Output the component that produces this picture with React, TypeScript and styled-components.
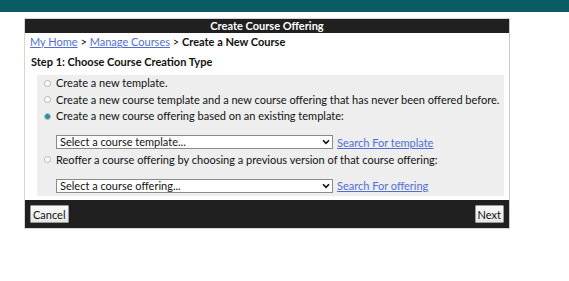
import React, { useState } from 'react';
import styled, { createGlobalStyle } from 'styled-components';

const GlobalStyle = createGlobalStyle`
  body {
    margin: 0;
    background: #ffffff;
    font-family: Lato, "Liberation Sans", sans-serif;
    font-size: 11px;
    color: #111;
  }
`;

const options = [
  { id: 'template', label: 'Create a new template.' },
  { id: 'both', label: 'Create a new course template and a new course offering that has never been offered before.' },
  { id: 'existing', label: 'Create a new course offering based on an existing template:', select: 'Select a course template...', search: 'Search For template' },
  { id: 'reoffer', label: 'Reoffer a course offering by choosing a previous version of that course offering:', select: 'Select a course offering...', search: 'Search For offering' },
];

const App = () => {
  const [choice, setChoice] = useState('existing');

  return (
    <>
      <GlobalStyle />
      <TopBar />
      <Dialog>
        <Header>Create Course Offering</Header>
        <Breadcrumb>
          <Link href="#">My Home</Link> &gt; <Link href="#">Manage Courses</Link> &gt; <b>Create a New Course</b>
        </Breadcrumb>
        <StepTitle>Step 1: Choose Course Creation Type</StepTitle>
        <Panel>
          {options.map(opt => (
            <React.Fragment key={opt.id}>
              <Row>
                <Radio
                  type="radio"
                  name="type"
                  checked={choice === opt.id}
                  onChange={() => setChoice(opt.id)}
                />
                <span>{opt.label}</span>
              </Row>
              {opt.select && (
                <SelectRow>
                  <SelectWrap>
                    <Select>
                      <option>{opt.select}</option>
                    </Select>
                    <Chevron width="8" height="6" viewBox="0 0 8 6">
                      <path d="M1 1.2 L4 4.4 L7 1.2" fill="none" stroke="#111" strokeWidth="1.6" />
                    </Chevron>
                  </SelectWrap>
                  <Link href="#">{opt.search}</Link>
                </SelectRow>
              )}
            </React.Fragment>
          ))}
        </Panel>
        <Footer>
          <Button>Cancel</Button>
          <Button>Next</Button>
        </Footer>
      </Dialog>
    </>
  );
};

const TopBar = styled.div`
  height: 12px;
  background: #0a5b64;
`;

const Dialog = styled.div`
  width: 484px;
  margin: 6px 0 0 24px;
  border: 1px solid #d6d6d6;
  border-right-color: #c8c8c8;
  background: #fff;
`;

const Header = styled.div`
  height: 14px;
  line-height: 14px;
  background: #202020;
  color: #fff;
  font-weight: 700;
  font-size: 11px;
  text-align: center;
`;

const Breadcrumb = styled.div`
  padding: 0 5px;
  height: 17px;
  line-height: 17px;
  font-size: 11px;
`;

const Link = styled.a`
  color: #4f6fd6;
  text-decoration: underline;
`;

const StepTitle = styled.div`
  padding: 3px 6px 0;
  height: 22px;
  line-height: 18px;
  font-weight: 700;
  font-size: 11px;
`;

const Panel = styled.div`
  margin: 0 5px 4px 12px;
  padding: 0 0 1px 6px;
  background: #eeeeee;
`;

const Row = styled.label`
  display: flex;
  align-items: center;
  height: 16.5px;
  line-height: 16px;
  white-space: nowrap;
`;

const Radio = styled.input`
  appearance: none;
  width: 7px;
  height: 7px;
  margin: 0 5px 0 1px;
  border: 1px solid #b4b4b4;
  border-radius: 50%;
  background: #fff;
  flex: none;

  &:checked {
    border-color: #8ab4bd;
    background: radial-gradient(circle, #2f8e9e 0 2.2px, #d7ecef 2.8px);
  }
`;

const SelectRow = styled.div`
  display: flex;
  align-items: center;
  gap: 4px;
  margin: 10px 0 2px 13px;
  height: 15px;
`;

const SelectWrap = styled.div`
  position: relative;
  width: 277px;
  height: 14px;
`;

const Select = styled.select`
  appearance: none;
  width: 100%;
  height: 14px;
  margin: 0;
  padding: 0 0 0 3px;
  border: 1px solid #8a8a8a;
  border-radius: 0;
  background: #fff;
  font-family: Lato, "Liberation Sans", sans-serif;
  font-size: 11px;
  line-height: 12px;
  color: #111;
`;

const Chevron = styled.svg`
  position: absolute;
  right: 3px;
  top: 4px;
  pointer-events: none;
`;

const Footer = styled.div`
  display: flex;
  justify-content: space-between;
  align-items: center;
  height: 28px;
  padding: 0 5px;
  background: #202020;
`;

const Button = styled.button`
  height: 18px;
  padding: 0 2px;
  border: 1px solid #9a9a9a;
  border-radius: 1px;
  background: linear-gradient(#fafafa, #e6e6e6);
  font-family: Lato, "Liberation Sans", sans-serif;
  font-size: 11px;
  color: #111;
`;

export default App;
